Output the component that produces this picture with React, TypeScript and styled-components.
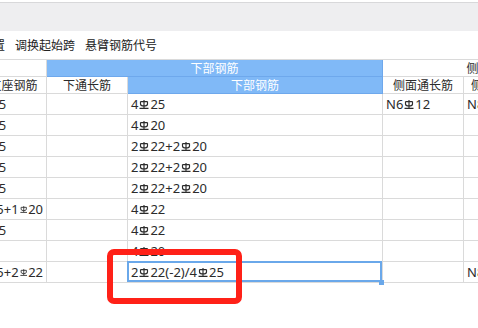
import React from 'react'
import styled, { createGlobalStyle } from 'styled-components'

const GlobalStyle = createGlobalStyle`
  html, body {
    margin: 0;
    padding: 0;
    background: #fff;
  }
  body {
    width: 478px;
    height: 328px;
    overflow: hidden;
    font-family: "Noto Sans", "Noto Sans CJK SC", sans-serif;
    color: #2b2b2b;
  }
`

// steel grade symbol, one per bar spec
const BarMark = () => (
  <Mark viewBox="0 0 10 9">
    <path d="M5 0V8M1.5 1.6H8.5M1.5 1.6V4Q1.5 6 5 6Q8.5 6 8.5 4V1.6M0.5 8.4H9.5" />
  </Mark>
)

const Spec: React.FC<{ text: string }> = ({ text }) => {
  const parts = text.split('%')
  return (
    <>
      {parts.map((p, i) => (
        <React.Fragment key={i}>
          {i > 0 && <BarMark />}
          {p}
        </React.Fragment>
      ))}
    </>
  )
}

const rows = [
  ['4%25', '', '4%25', 'N6%12', 'N8%12', ''],
  ['4%25', '', '4%20', '', '', ''],
  ['4%25', '', '2%22+2%20', '', '', ''],
  ['4%25', '', '2%22+2%20', '', '', ''],
  ['4%25', '', '2%22+2%20', '', '', ''],
  ['4%25+1%20', '', '4%22', '', '', ''],
  ['4%25', '', '4%22', '', '', ''],
  ['', '', '4%20', '', '', ''],
  ['4%25+2%22', '', '2%22(-2)/4%25', '', 'N8%12', ''],
]

const App: React.FC = () => {
  return (
    <Page>
      <GlobalStyle />
      <TopBar />
      <Toolbar>
        <Tool>支座位置</Tool>
        <Tool>调换起始跨</Tool>
        <Tool>悬臂钢筋代号</Tool>
      </Toolbar>
      <Grid>
        <Cell $head />
        <Cell $head $blue $span={2}>下部钢筋</Cell>
        <Cell $head $span={3}>侧面钢筋</Cell>

        <Cell $head>右支座钢筋</Cell>
        <Cell $head>下通长筋</Cell>
        <Cell $head $blue>下部钢筋</Cell>
        <Cell $head>侧面通长筋</Cell>
        <Cell $head>侧面原位标注筋</Cell>
        <Cell $head>拉筋</Cell>

        {rows.map((r, ri) =>
          r.map((c, ci) => (
            <Cell key={ri + '-' + ci} $selected={ri === 8 && ci === 2}>
              <Spec text={c} />
            </Cell>
          ))
        )}
      </Grid>
      <Callout />
    </Page>
  )
}

export default App

const Page = styled.div`
  position: relative;
  width: 478px;
  height: 328px;
  overflow: hidden;
`

const TopBar = styled.div`
  margin-top: 2px;
  height: 28px;
  border-top: 1px solid #d8d8da;
  background: #eeeef0;
`

const Toolbar = styled.div`
  display: flex;
  align-items: center;
  gap: 10px;
  height: 28px;
  margin-left: -43px;
  font-size: 12px;
  color: #222;
`

const Tool = styled.div`
  white-space: nowrap;
  cursor: pointer;
`

const Grid = styled.div`
  display: grid;
  grid-template-columns: 78px 81px 255px 81px 99px 36px;
  grid-template-rows: 17px 17px repeat(9, 21px);
  width: max-content;
  margin-left: -31px;
  border-top: 1px solid #dadada;
`

const Cell = styled.div<{ $head?: boolean; $blue?: boolean; $span?: number; $selected?: boolean }>`
  position: relative;
  box-sizing: border-box;
  grid-column: span ${(p) => p.$span || 1};
  display: flex;
  align-items: center;
  justify-content: ${(p) => (p.$head ? 'center' : 'flex-start')};
  padding: 0 3px;
  white-space: nowrap;
  font-size: ${(p) => (p.$head ? '12px' : '13px')};
  color: ${(p) => (p.$blue ? '#fff' : '#2b2b2b')};
  background: ${(p) => (p.$blue ? '#80b9f7' : '#fff')};
  border-right: 1px solid ${(p) => (p.$blue ? '#6ea8ec' : '#dadada')};
  border-bottom: 1px solid ${(p) => (p.$blue ? '#6ea8ec' : '#dadada')};

  ${(p) =>
    p.$selected &&
    `
    &::after {
      content: '';
      position: absolute;
      left: -1px;
      top: -1px;
      right: 0;
      bottom: 0;
      border: 2px solid #6aa8ea;
    }
    &::before {
      content: '';
      position: absolute;
      right: -2px;
      bottom: -3px;
      width: 5px;
      height: 5px;
      background: #6aa8ea;
      z-index: 1;
    }
  `}
`

const Mark = styled.svg`
  width: 10px;
  height: 9px;
  margin: 0 1px;
  vertical-align: 2px;
  fill: none;
  stroke: currentColor;
  stroke-width: 1.15;
`

const Callout = styled.div`
  position: absolute;
  left: 107px;
  top: 249px;
  width: 135px;
  height: 55px;
  box-sizing: border-box;
  border: 6px solid #ff2118;
  border-radius: 7px;
`
